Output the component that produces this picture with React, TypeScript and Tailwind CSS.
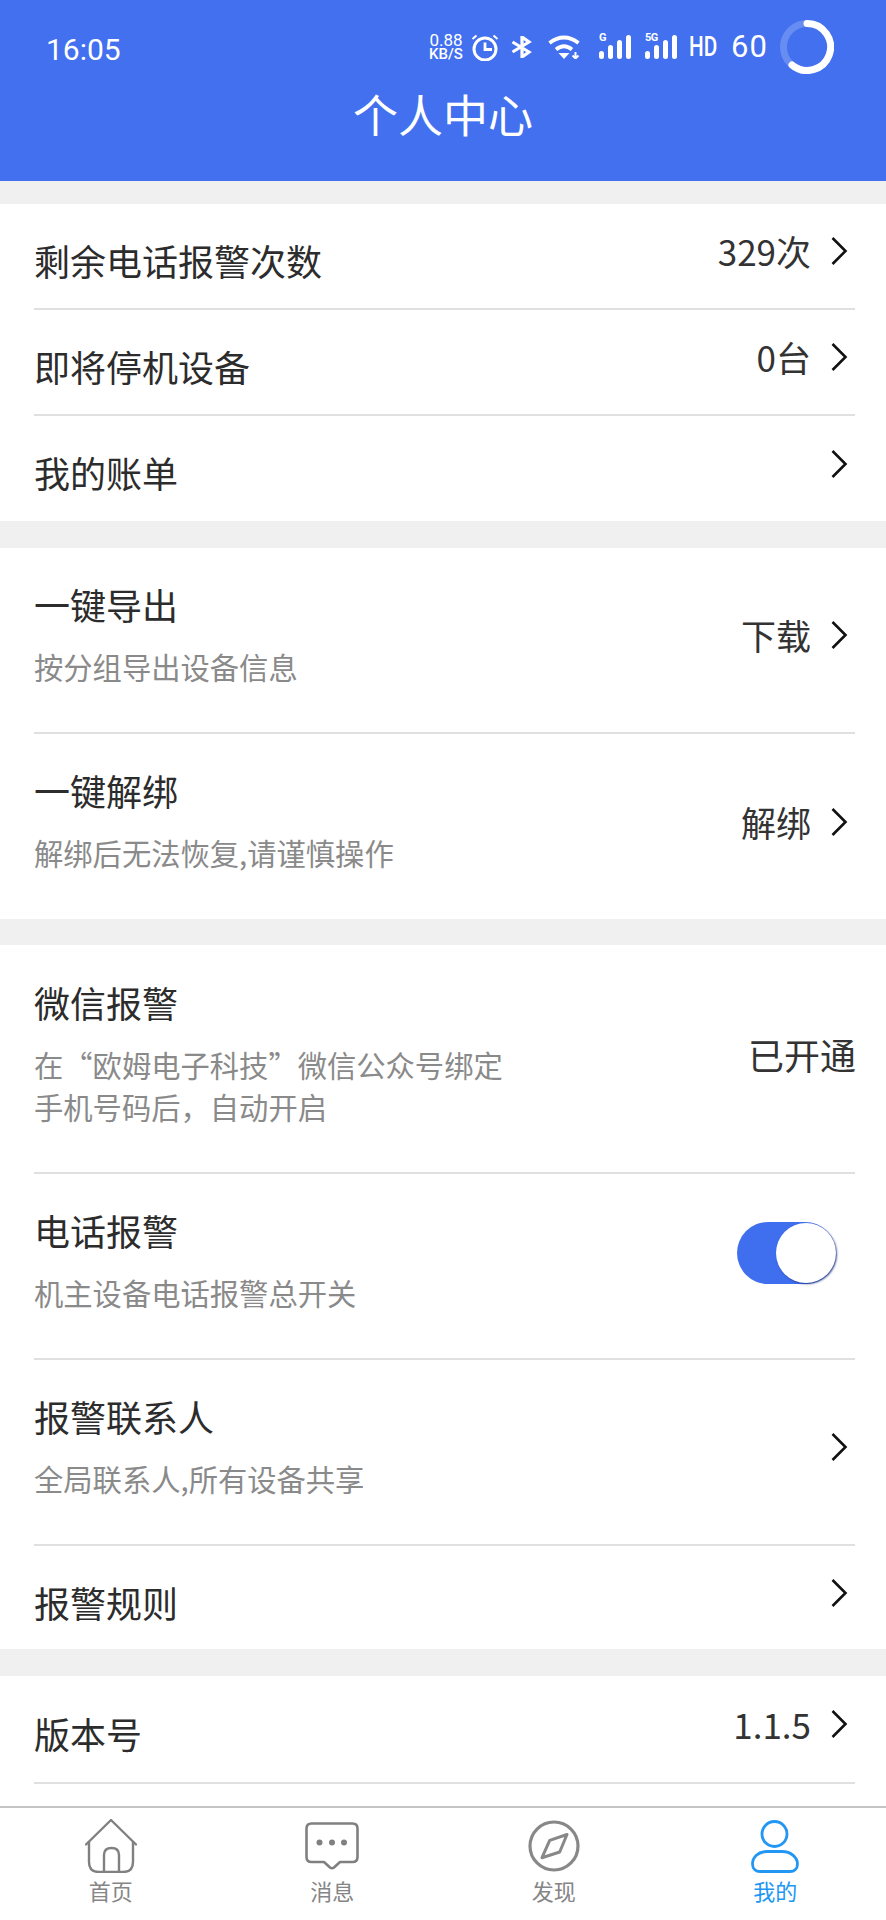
import type { ReactNode } from "react";

const cjk = "font-['Noto_Sans_CJK_SC','Noto_Sans',sans-serif]";

function Chevron() {
  return (
    <svg width="18" height="30" viewBox="0 0 18 30" fill="none" className="shrink-0">
      <path d="M2.5 2 L15.5 15 L2.5 28" stroke="#111" strokeWidth="2.6" />
    </svg>
  );
}

function Row({ title, sub, right, arrow = true, last = false, h, pt = "pt-[31px]" }: { title: string; sub?: string[]; right?: ReactNode; arrow?: boolean; last?: boolean; h: string; pt?: string }) {
  return (
    <div className={`${h} ml-[34px] mr-[31px] flex items-center justify-between ${last ? "" : "border-b-2 border-[#e0e0e0]"}`}>
      <div className={`self-start ${pt}`}>
        <div className="text-[36px] leading-[50px] text-[#2c2c2c]">{title}</div>
        {sub && (
          <div className="mt-[16px] text-[29.3px] leading-[42px] text-[#8a8a8a]">
            {sub.map((s) => (
              <div key={s}>{s}</div>
            ))}
          </div>
        )}
      </div>
      <div className="mb-[10px] flex items-center gap-[19px] pr-[7px] text-[35px] leading-[50px] text-[#333]">
        {right}
        {arrow && <Chevron />}
      </div>
    </div>
  );
}

function Signal({ label, className }: { label: string; className: string }) {
  return (
    <div className={`relative h-[24px] w-[32px] ${className}`}>
      <span className="absolute left-0 top-[-3px] font-['Roboto',sans-serif] text-[11px] font-bold leading-[12px] tracking-[-0.5px]">{label}</span>
      <div className="absolute bottom-0 right-0 flex items-end gap-[4px]">
        <div className="h-[8px] w-[5px] rounded-full bg-white" />
        <div className="h-[14px] w-[5px] rounded-full bg-white" />
        <div className="h-[19px] w-[5px] rounded-full bg-white" />
        <div className="h-[24px] w-[5px] rounded-full bg-white" />
      </div>
    </div>
  );
}

function StatusIcons() {
  return (
    <div className="flex items-center text-white">
      <div className="flex w-[34px] flex-col items-center font-['Roboto',sans-serif]">
        <div className="text-[17px] leading-[14px]">0.88</div>
        <div className="text-[15px] font-medium leading-[14px]">KB/S</div>
      </div>
      <svg width="28" height="27" viewBox="0 0 28 27" fill="none" stroke="#fff" className="ml-[8px]">
        <circle cx="14" cy="15" r="11" strokeWidth="3" />
        <path d="M14 8.5 V15.5 H21" strokeWidth="2.8" />
        <path d="M1.5 5 L5.5 1.5 M26.5 5 L22.5 1.5" strokeWidth="2" />
      </svg>
      <svg width="21" height="22" viewBox="0 0 21 22" fill="none" stroke="#fff" strokeWidth="3.2" className="ml-[12px]">
        <path d="M1.5 6 L18 16 L11 21 V1 L18 6 L1.5 16" />
      </svg>
      <svg width="34" height="24" viewBox="0 0 34 24" fill="none" stroke="#fff" strokeWidth="3.8" className="ml-[16px]">
        <path d="M1.5 8 Q16 -3 30.5 8" />
        <path d="M8 14.5 Q16 8 24 14.5" />
        <path d="M10.5 18 H21.5 L16 24 Z" fill="#fff" stroke="none" />
        <path d="M27.5 17 V22 M24.5 20.5 L27.5 23.5 L30.5 20.5" strokeWidth="2" />
      </svg>
      <Signal label="G" className="ml-[17px]" />
      <Signal label="5G" className="ml-[14px]" />
      <div className="ml-[12px] w-[28px] font-['Roboto',sans-serif] text-[28px] font-medium leading-[32px]">
        <span className="inline-block origin-left scale-x-[0.74]">HD</span>
      </div>
      <div className="ml-[14px] w-[36px] font-['Roboto',sans-serif] text-[31px] leading-[32px] tracking-[1px]">60</div>
      <svg width="54" height="54" viewBox="0 0 54 54" fill="none" className="ml-[13px]">
        <circle cx="27" cy="27" r="23.5" stroke="#fff" strokeOpacity="0.2" strokeWidth="7" />
        <path d="M27 3.5 A23.5 23.5 0 1 1 12 45" stroke="#fff" strokeWidth="7" strokeLinecap="round" />
      </svg>
    </div>
  );
}

function Toggle() {
  return (
    <div className="mb-[16px] mr-[12px] flex h-[62px] w-[99px] items-center justify-end rounded-full bg-[#3f6fee]">
      <div className="h-[60px] w-[60px] rounded-full bg-white shadow-[1px_1px_2px_rgba(25,45,130,0.85)]" />
    </div>
  );
}

function Gap({ h }: { h: string }) {
  return <div className={`${h} bg-[#f0f0f0]`} />;
}

const tabs = [
  {
    label: "首页",
    icon: (
      <svg width="52" height="54" viewBox="0 0 52 54" fill="none" stroke="#808080" strokeWidth="2.4">
        <path d="M1 25.5 L26 1 L51 25.5" strokeLinejoin="round" strokeLinecap="round" />
        <path d="M4 22 V43 Q4 53 14 53 H38 Q48 53 48 43 V22" />
        <path d="M19 53 V36 Q19 29 26.5 29 Q34 29 34 36 V53" />
      </svg>
    ),
  },
  {
    label: "消息",
    icon: (
      <svg width="54" height="48" viewBox="0 0 54 48" fill="none" stroke="#808080" strokeWidth="2.6">
        <path d="M6.5 1.5 H47.5 Q52.5 1.5 52.5 6.5 V35 Q52.5 40 47.5 40 H35 L29 45.5 Q27 47 25 45.5 L19 40 H6.5 Q1.5 40 1.5 35 V6.5 Q1.5 1.5 6.5 1.5 Z" strokeLinejoin="round" />
        <circle cx="14.5" cy="20.5" r="3" fill="#808080" stroke="none" />
        <circle cx="27" cy="20.5" r="3" fill="#808080" stroke="none" />
        <circle cx="39" cy="20.5" r="3" fill="#808080" stroke="none" />
      </svg>
    ),
  },
  {
    label: "发现",
    icon: (
      <svg width="52" height="52" viewBox="0 0 52 52" fill="none" stroke="#888">
        <circle cx="26" cy="26" r="24" strokeWidth="3.2" />
        <path d="M39 14.5 L31.7 32 L14 37.7 L21.7 20.3 Z" strokeWidth="3" strokeLinejoin="round" />
      </svg>
    ),
  },
  {
    label: "我的",
    active: true,
    icon: (
      <svg width="48" height="53" viewBox="0 0 48 53" fill="none" stroke="#2196f3" strokeWidth="2.8">
        <circle cx="23.5" cy="14" r="12.5" />
        <path d="M16 31.5 H31 C40 31.5 46.5 37.5 46.5 44 C46.5 49 43 51.5 39 51.5 H9 C5 51.5 1.5 49 1.5 44 C1.5 37.5 7 31.5 16 31.5 Z" />
      </svg>
    ),
  },
];

export default function App() {
  return (
    <div className={`flex h-[1920px] w-[886px] flex-col overflow-hidden bg-white ${cjk}`}>
      <header className="h-[181px] shrink-0 bg-[#4270ef] text-white">
        <div className="flex items-start justify-between pl-[46px] pr-[52px] pt-[20px]">
          <span className="mt-[3px] font-['Roboto',sans-serif] text-[30px] leading-[54px]">16:05</span>
          <StatusIcons />
        </div>
        <h1 className="mt-[7px] text-center text-[45px] font-normal leading-[60px]">个人中心</h1>
      </header>
      <div className="min-h-0 flex-1 overflow-hidden bg-white">
        <Gap h="h-[23px]" />
        <Row h="h-[106px]" title="剩余电话报警次数" right="329次" />
        <Row h="h-[106px]" title="即将停机设备" right="0台" />
        <Row h="h-[105px]" title="我的账单" last />
        <Gap h="h-[27px]" />
        <Row h="h-[186px]" title="一键导出" sub={["按分组导出设备信息"]} right="下载" />
        <Row h="h-[185px]" title="一键解绑" sub={["解绑后无法恢复,请谨慎操作"]} right="解绑" last />
        <Gap h="h-[26px]" />
        <Row h="h-[229px]" pt="pt-[32px]" title="微信报警" sub={["在“欧姆电子科技”微信公众号绑定", "手机号码后，自动开启"]} right={<span className="mr-[-8px] text-[36px]">已开通</span>} arrow={false} />
        <Row h="h-[186px]" title="电话报警" sub={["机主设备电话报警总开关"]} arrow={false} right={<Toggle />} />
        <Row h="h-[186px]" title="报警联系人" sub={["全局联系人,所有设备共享"]} />
        <Row h="h-[103px]" title="报警规则" last />
        <Gap h="h-[27px]" />
        <Row h="h-[108px]" pt="pt-[32px]" title="版本号" right="1.1.5" />
      </div>
      <nav className="grid h-[114px] shrink-0 grid-cols-4 border-t-2 border-[#c4c4c4] bg-white">
        {tabs.map((t) => (
          <div key={t.label} className="flex flex-col items-center pt-[10px]">
            <div className="flex h-[56px] items-center">{t.icon}</div>
            <span className={`mt-[1px] text-[22px] leading-[30px] ${t.active ? "text-[#2196f3]" : "text-[#858585]"}`}>{t.label}</span>
          </div>
        ))}
      </nav>
    </div>
  );
}
